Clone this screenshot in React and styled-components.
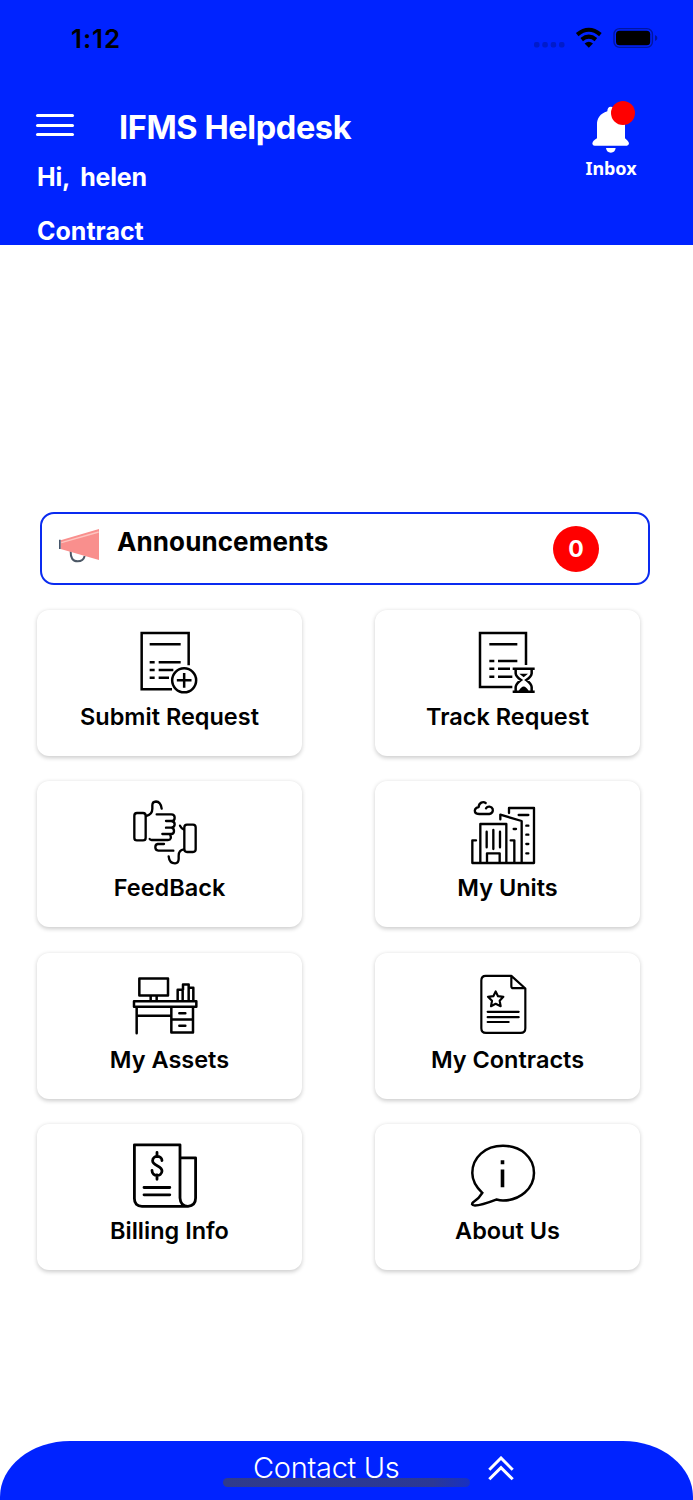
import styled, { createGlobalStyle } from "styled-components";

const MENU_ITEMS = [
  { title: "Submit Request", icon: SubmitIcon },
  { title: "Track Request", icon: TrackIcon },
  { title: "FeedBack", icon: FeedbackIcon },
  { title: "My Units", icon: UnitsIcon },
  { title: "My Assets", icon: AssetsIcon },
  { title: "My Contracts", icon: ContractsIcon },
  { title: "Billing Info", icon: BillingIcon },
  { title: "About Us", icon: AboutIcon },
];

const App = () => {
  return (
    <>
      <GlobalStyle />
      <Screen>
        <Header>
          <StatusBar>
            <Time>1:12</Time>
            <StatusIcons />
          </StatusBar>
          <TitleRow>
            <MenuButton aria-label="Menu">
              <MenuLine />
              <MenuLine />
              <MenuLine />
            </MenuButton>
            <AppTitle>IFMS Helpdesk</AppTitle>
            <Inbox>
              <BellIcon />
              <UnreadDot />
              <InboxLabel>Inbox</InboxLabel>
            </Inbox>
          </TitleRow>
          <Greeting>
            <span>Hi,</span>
            <span>helen</span>
          </Greeting>
          <ContractLabel>Contract</ContractLabel>
        </Header>
        <Main>
          <Announcements>
            <MegaphoneIcon />
            <AnnouncementsTitle>Announcements</AnnouncementsTitle>
            <CountBadge>0</CountBadge>
          </Announcements>
          <MenuGrid>
            {MENU_ITEMS.map(({ title, icon: Icon }) => (
              <Card key={title}>
                <Icon />
                <CardTitle>{title}</CardTitle>
              </Card>
            ))}
          </MenuGrid>
        </Main>
        <Footer>
          <FooterTitle>Contact Us</FooterTitle>
          <ChevronsIcon />
          <HomeIndicator />
        </Footer>
      </Screen>
    </>
  );
};

function StatusIcons() {
  return (
    <svg width="126" height="24" viewBox="532 26 126 24">
      <g fill="#001bcb">
        <rect x="534" y="42" width="5.5" height="5.5" rx="2" />
        <rect x="542.3" y="42" width="5.5" height="5.5" rx="2" />
        <rect x="550.7" y="42" width="5.5" height="5.5" rx="2" />
        <rect x="559" y="42" width="5.5" height="5.5" rx="2" />
      </g>
      <g fill="none" stroke="#000" strokeWidth="4">
        <path d="M577.2 34.6Q588.8 24.9 600.4 34.6" />
        <path d="M581.7 39.6Q588.8 33.7 595.9 39.6" />
      </g>
      <path d="M584.6 43.5Q588.8 39.8 593 43.5L588.8 47.7z" />
      <rect x="614" y="28.6" width="38.4" height="18.8" rx="5.5" fill="none" stroke="#0016a0" strokeWidth="1.4" />
      <rect x="616" y="30.8" width="34.2" height="14.4" rx="3.5" />
      <path d="M655 35Q657.4 36 657.4 38T655 41z" fill="#0016a0" />
    </svg>
  );
}

function BellIcon() {
  return (
    <svg width="38" height="47" viewBox="276 318 114 141" fill="#fff">
      <path d="M332 320Q322 320 322 334C300 341 291 355 291 374V415Q278 422 277 431Q278 437 284 437H381Q387 436 387 430Q386 424 375 415V374C375 350 360 340 343 335Q343 320 332 320z" />
      <path d="M318 444H347Q345 458 332.500 458T318 444z" />
    </svg>
  );
}

function MegaphoneIcon() {
  return (
    <svg width="42" height="36" viewBox="84 84 126 108">
      <path d="M122 154Q121 184 143 184Q160 184 164 168" fill="none" stroke="#4c5866" strokeWidth="6" />
      <path d="M92 121L207 87V180L92 147z" fill="#f98f8d" />
      <path d="M94 128L206 96" stroke="#fdc5c0" strokeWidth="4" />
      <path d="M89.500 119V147" stroke="#46566b" strokeWidth="5" />
    </svg>
  );
}

function SubmitIcon() {
  return (
    <CardIcon viewBox="66 24 198 198" $stroke={7.5}>
      <path d="M236 136V39H95V208H186" />
      <path d="M119 73H212M119 127H134M146 127H212M119 150H134M146 150H190M119 173H134M146 173H177" />
      <circle cx="222.500" cy="181" r="36" />
      <path d="M222.500 159V203M200.500 181H244.500" />
    </CardIcon>
  );
}

function TrackIcon() {
  return (
    <CardIcon viewBox="60 24 198 198" $stroke={7.5}>
      <path d="M228 135V39H90V201H187" />
      <path d="M118 73H202M118 123H133M144 123H202M118 146H133M144 146H180M118 170H133M144 170H187" />
      <path d="M188 146H254M188 215H254" />
      <path d="M197 148V160Q198 170 213 180Q198 191 197 201V213M245 148V160Q244 170 229 180Q244 191 245 201V213" />
      <path d="M208 161H234L221 172zM206 213Q221 186 236 213z" fill="#000" stroke="none" />
    </CardIcon>
  );
}

function FeedbackIcon() {
  return (
    <CardIcon viewBox="66 27 198 198" $stroke={7} $round>
      <rect x="73" y="69" width="34" height="82" rx="8" />
      <path d="M108 78C122 75 127 66 127 56V46Q127 35 138 34.500Q152 35 155 56" />
      <path d="M140 73H184Q194 73 194 83T184 93H168M184 93Q194 94 194 103T184 113H168M184 113Q192 114 192 123T184 132H157M180 132Q187 150 174 150H125Q120 150 119 147" />
      <path d="M162 162H143Q136 163 136 172T145 182H190" />
      <rect x="223" y="104" width="34" height="82" rx="8" />
      <path d="M222 178Q206 180 206 197V206Q206 219 195 220Q178 220 176 199M221 118Q214 115 210 107" />
    </CardIcon>
  );
}

function UnitsIcon() {
  return (
    <CardIcon viewBox="60 27 198 198" $stroke={7} $round>
      <path d="M107 39C99 33 87 38 86 51C76 53 73 60 75 66C77 71 82 72 88 72H118C126 71 130 64 128 57C125 49 113 47 108 55" />
      <path d="M67 219H252V54H177V69M215 219V93L151 74V88M91 219V102H169V219M67 219V151H78M182 151H193V219M111 219V190H149V219" />
      <path d="M110 125V172M130 120V177M150 125V172M206 75H235M191 117H198M229 107H235M229 134H235M229 162H235M229 190H235" />
    </CardIcon>
  );
}

function AssetsIcon() {
  return (
    <CardIcon viewBox="66 16.5 198 198" $stroke={7.5} $round>
      <path d="M88 39H174V90H88zM122 91V106M140 91V106M72 107H259V124H72zM80 126V203" />
      <path d="M84 151H183M184 126V201H249V126M184 162H249M208 143H226M208 181H226" />
      <path d="M203 105V73H218V105M219 73V57H236V105M237 67H250V105" />
    </CardIcon>
  );
}

function ContractsIcon() {
  return (
    <CardIcon viewBox="60 16.5 198 198" $stroke={6.5} $round>
      <path d="M184 31H107Q94 31 94 45V188Q94 202 108 202H212Q226 202 226 188V69zM184 32V62Q184 68 190 68H225" />
      <path d="M137 78L144 92L160 94L149 106L152 122L137 115L123 122L126 106L114 94L130 92z" />
      <path d="M113 139H206M113 155H206M113 169.500H176" />
    </CardIcon>
  );
}

function BillingIcon() {
  return (
    <CardIcon viewBox="0 0 66 66" $stroke={2.8} $round>
      <path d="M56 64.300H10Q2.400 64.300 2.400 56.500V2.800H48V56Q48.500 64.300 56 64.300Q63.600 63.500 63.600 56V15.800H49" />
      <path d="M12 45.500H37.800M12 52.800H37.800" />
      <path d="M25 10.500V14.500M25 33V37.300M30 18.500C29.500 13 20.800 13 20.600 18.700C20.600 24 30 23.500 30 29C29.800 35 20 35 20 28.500" />
    </CardIcon>
  );
}

function AboutIcon() {
  return (
    <CardIcon viewBox="0 0 66 66" $stroke={2.5}>
      <path d="M12.300 50.800C5 44 2.300 38 2.300 31C2.300 15.500 15 3.800 33 3.800S64 15.500 64 31S50 58.500 33 58.500Q30 58.500 26.500 57.500C20 60 11 63.500 5 63.500C1.500 63.300 1.300 62 3.500 60Q9 56.500 12.300 50.800z" />
      <path d="M32.500 18.200V22.200M32.500 27.500V45.300" strokeWidth="3.6" />
    </CardIcon>
  );
}

function ChevronsIcon() {
  return (
    <svg width="26" height="25" viewBox="0 0 26 25" fill="none" stroke="#fff" strokeWidth="3">
      <path d="M1.300 13.700L13 2L24.700 13.700M1.300 23.300L13 11.600L24.700 23.300" />
    </svg>
  );
}

const GlobalStyle = createGlobalStyle`
  * {
    box-sizing: border-box;
  }

  body {
    margin: 0;
    background: #fff;
    font-family: Inter, "Liberation Sans", sans-serif;
  }
`;

const Screen = styled.div`
  display: flex;
  flex-direction: column;
  width: 693px;
  height: 1500px;
  overflow: hidden;
`;

const Header = styled.header`
  height: 245px;
  padding: 0 35px 0 37px;
  background: #0023ff;
  color: #fff;
`;

const StatusBar = styled.div`
  display: flex;
  justify-content: space-between;
  padding: 26px 0 0 34px;
  height: 98px;
`;

const Time = styled.div`
  font-size: 26px;
  line-height: 25px;
  font-weight: 600;
  letter-spacing: 0.9px;
  color: #000;
`;

const TitleRow = styled.div`
  display: flex;
  align-items: flex-start;
  height: 64px;
`;

const MenuButton = styled.button`
  display: flex;
  flex-direction: column;
  gap: 6.400px;
  width: 37.500px;
  margin: 16.400px 0 0 -1px;
  padding: 0;
  border: 0;
  background: none;
`;

const MenuLine = styled.span`
  height: 3px;
  border-radius: 2px;
  background: #fff;
`;

const AppTitle = styled.h1`
  margin: 9.500px 0 0 45.500px;
  font-size: 32.500px;
  line-height: 40px;
  font-weight: 700;
  letter-spacing: -0.4px;
`;

const Inbox = styled.div`
  position: relative;
  display: flex;
  flex-direction: column;
  align-items: center;
  width: 52px;
  margin: 8px 21px 0 auto;
`;

const UnreadDot = styled.span`
  position: absolute;
  top: -5.500px;
  right: 2px;
  width: 24px;
  height: 24px;
  border-radius: 50%;
  background: #f00;
`;

const InboxLabel = styled.span`
  margin-top: 3px;
  font-family: "Noto Sans", sans-serif;
  font-size: 18px;
  line-height: 24px;
  font-weight: 700;
  letter-spacing: -0.1px;
`;

const Greeting = styled.div`
  display: flex;
  gap: 10px;
  font-size: 25px;
  line-height: 30px;
  font-weight: 700;
  letter-spacing: -0.2px;
`;

const ContractLabel = styled.div`
  margin-top: 24px;
  font-size: 25px;
  line-height: 30px;
  font-weight: 700;
`;

const Main = styled.main`
  flex: 1;
  padding: 267px 43px 0 37px;
`;

const Announcements = styled.section`
  display: flex;
  align-items: flex-start;
  width: 610px;
  height: 73px;
  margin-left: 3px;
  padding: 12px 49px 0 16px;
  border: 2px solid #0a2bf0;
  border-radius: 14px;

  svg {
    margin-top: 2px;
  }
`;

const AnnouncementsTitle = styled.h2`
  margin: 0 0 0 17px;
  font-size: 26px;
  line-height: 32px;
  font-weight: 700;
  letter-spacing: 0.1px;
`;

const CountBadge = styled.span`
  width: 46px;
  height: 46px;
  margin-left: auto;
  border-radius: 50%;
  background: #f00;
  color: #fff;
  font-size: 23px;
  line-height: 46px;
  font-weight: 700;
  text-align: center;
`;

const MenuGrid = styled.div`
  display: grid;
  grid-template-columns: repeat(2, 265px);
  column-gap: 73px;
  row-gap: 25.300px;
  margin-top: 25px;
`;

const Card = styled.div`
  display: flex;
  flex-direction: column;
  align-items: center;
  height: 146px;
  padding-top: 18px;
  border-radius: 12px;
  background: #fff;
  box-shadow: 0 1.500px 4px rgba(0, 0, 0, 0.2);
`;

const CardIcon = styled.svg`
  width: 66px;
  height: 66px;
  margin-right: 10px;
  fill: none;
  stroke: #000;
  stroke-width: ${(props) => props.$stroke};
  stroke-linecap: ${(props) => (props.$round ? "round" : "butt")};
  stroke-linejoin: ${(props) => (props.$round ? "round" : "miter")};
`;

const CardTitle = styled.span`
  margin-top: 8px;
  font-size: 23.500px;
  line-height: 30px;
  font-weight: 600;
  white-space: nowrap;
  color: #000;
`;

const Footer = styled.footer`
  position: relative;
  display: flex;
  height: 59px;
  padding-left: 253px;
  border-radius: 70px 70px 0 0 / 56px 56px 0 0;
  background: #0023ff;
  color: #fff;

  svg {
    margin: 15px 0 0 89px;
  }
`;

const FooterTitle = styled.span`
  width: 146px;
  margin-top: 8.500px;
  font-size: 29px;
  line-height: 36px;
  font-weight: 300;
  letter-spacing: -0.3px;
  white-space: nowrap;
`;

const HomeIndicator = styled.span`
  position: absolute;
  left: 223px;
  bottom: 13px;
  width: 247px;
  height: 9px;
  border-radius: 5px;
  background: linear-gradient(90deg, #303b8c 0%, #2b3896 85%, #1730c4 100%);
`;

export default App;
